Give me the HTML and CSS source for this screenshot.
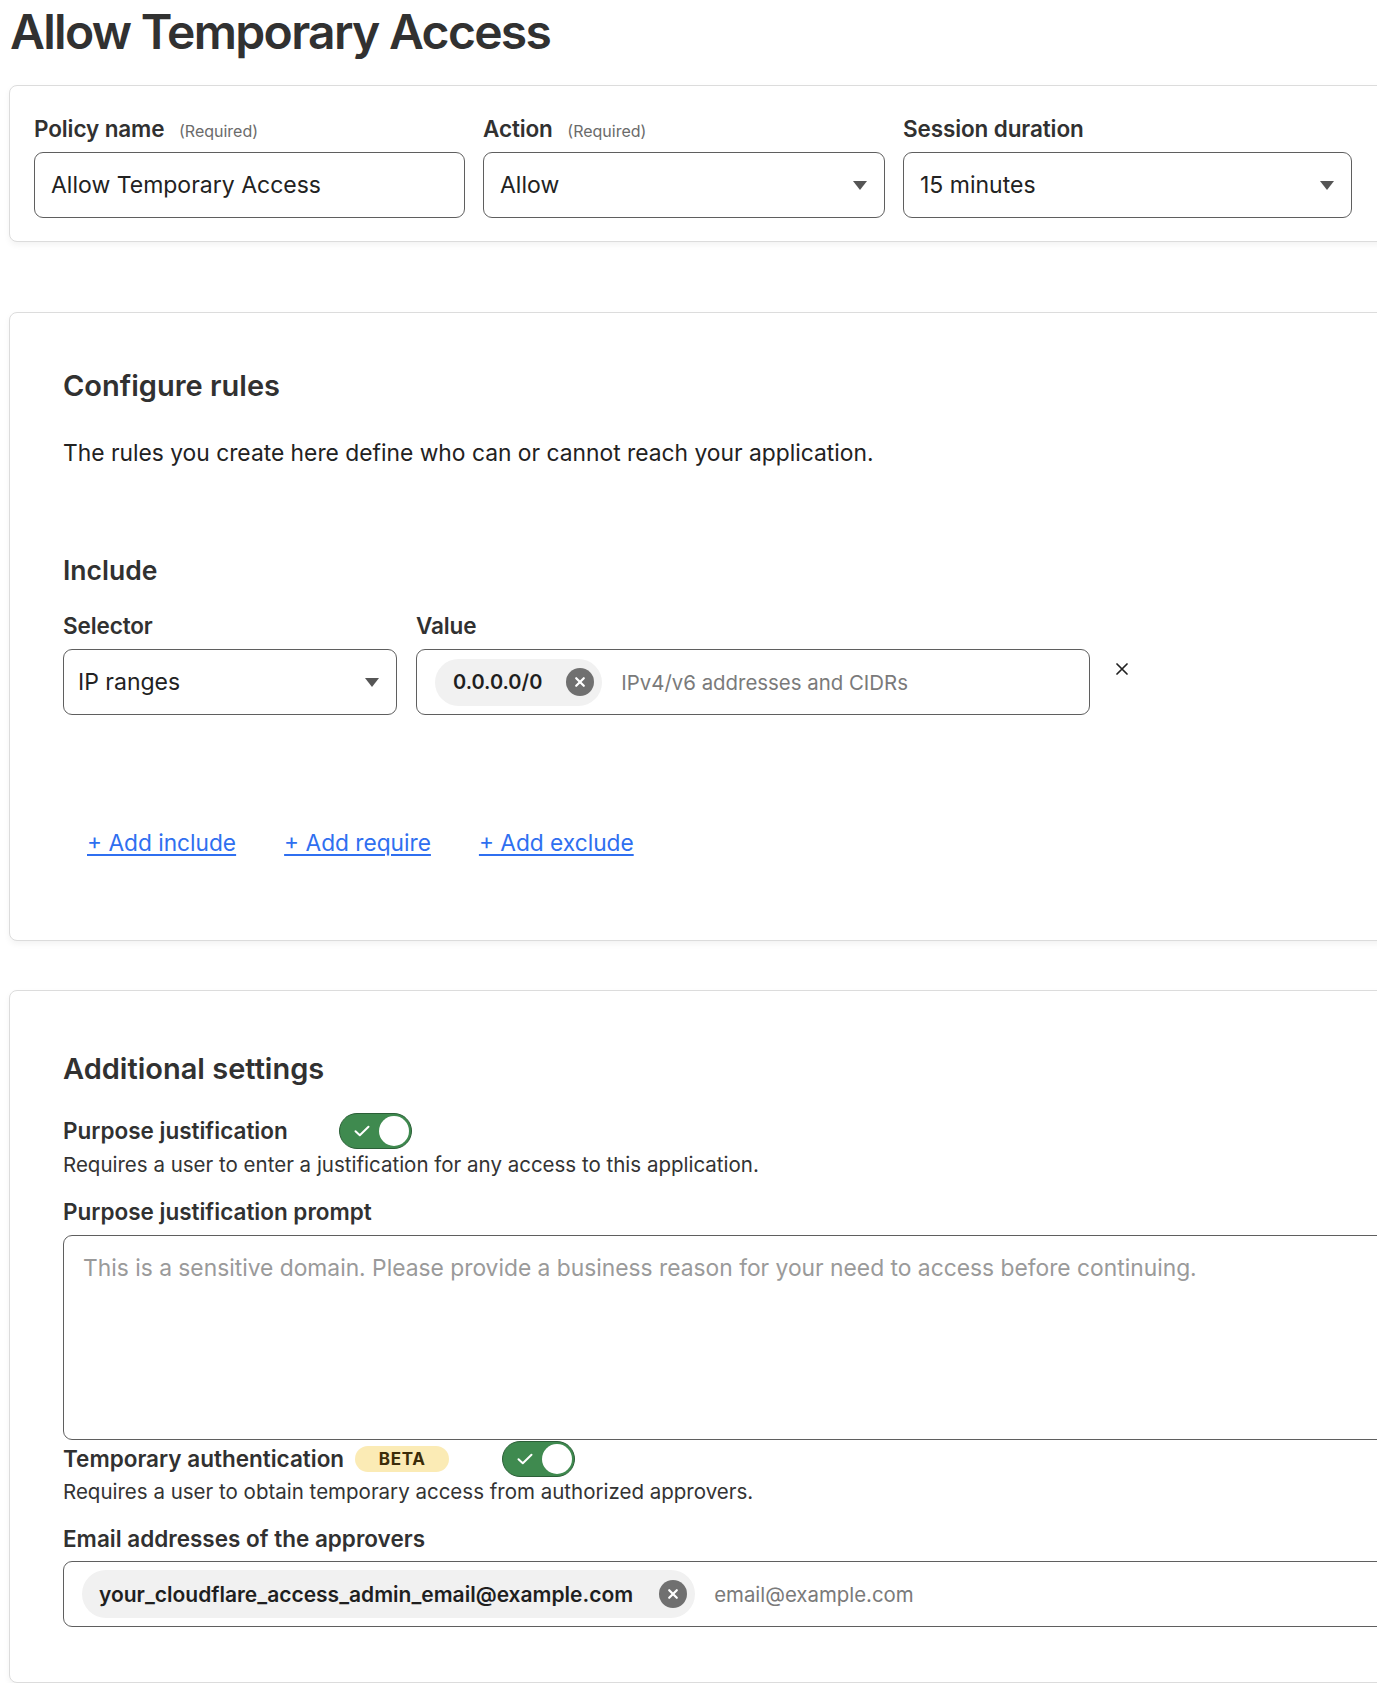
FILE: index.html
```html
<!DOCTYPE html>
<html lang="en">
<head>
<meta charset="utf-8">
<title>Allow Temporary Access</title>
<link rel="stylesheet" href="styles.css">
</head>
<body>
<div class="page">
  <h1 class="title">Allow Temporary Access</h1>

  <section class="card card-top">
    <div class="top-grid">
      <div class="field">
        <div class="label">Policy name <span class="req">(Required)</span></div>
        <div class="box"><span class="val">Allow Temporary Access</span></div>
      </div>
      <div class="field">
        <div class="label">Action <span class="req">(Required)</span></div>
        <div class="box select"><span class="val">Allow</span><span class="caret"></span></div>
      </div>
      <div class="field">
        <div class="label">Session duration</div>
        <div class="box select"><span class="val">15 minutes</span><span class="caret"></span></div>
      </div>
    </div>
  </section>

  <section class="card card-rules">
    <h2 class="h2">Configure rules</h2>
    <p class="lead">The rules you create here define who can or cannot reach your application.</p>
    <h3 class="h3">Include</h3>
    <div class="rule-row">
      <div class="field sel-field">
        <div class="label">Selector</div>
        <div class="box select"><span class="val">IP ranges</span><span class="caret"></span></div>
      </div>
      <div class="field val-field">
        <div class="label">Value</div>
        <div class="box tags">
          <span class="chip"><span class="chip-text">0.0.0.0/0</span><span class="chip-x"><svg viewBox="0 0 28 28" width="28" height="28"><circle cx="14" cy="14" r="14" fill="#707070"/><path d="M10.2 10.2 L17.8 17.8 M17.8 10.2 L10.2 17.8" stroke="#fff" stroke-width="2.2" stroke-linecap="round"/></svg></span></span>
          <span class="ph">IPv4/v6 addresses and CIDRs</span>
        </div>
      </div>
      <div class="remove"><svg viewBox="0 0 12 12" width="12" height="12"><path d="M1 1 L11 11 M11 1 L1 11" stroke="#222" stroke-width="1.7" stroke-linecap="round"/></svg></div>
    </div>
    <div class="links">
      <a class="link" href="#">+ Add include</a>
      <a class="link" href="#">+ Add require</a>
      <a class="link" href="#">+ Add exclude</a>
    </div>
  </section>

  <section class="card card-settings">
    <h2 class="h2">Additional settings</h2>
    <div class="toggle-row">
      <span class="label-lg">Purpose justification</span>
      <span class="toggle t1"><svg class="check" viewBox="0 0 16 12" width="16" height="12"><path d="M1.5 6.2 L5.8 10.2 L14.5 1.8" stroke="#fff" stroke-width="2" fill="none" stroke-linecap="round" stroke-linejoin="round"/></svg><span class="knob"></span></span>
    </div>
    <p class="desc">Requires a user to enter a justification for any access to this application.</p>
    <div class="label-lg sub">Purpose justification prompt</div>
    <div class="textarea"><span class="ta-ph">This is a sensitive domain. Please provide a business reason for your need to access before continuing.</span></div>
    <div class="toggle-row row2">
      <span class="label-lg">Temporary authentication</span>
      <span class="beta">BETA</span>
      <span class="toggle t2"><svg class="check" viewBox="0 0 16 12" width="16" height="12"><path d="M1.5 6.2 L5.8 10.2 L14.5 1.8" stroke="#fff" stroke-width="2" fill="none" stroke-linecap="round" stroke-linejoin="round"/></svg><span class="knob"></span></span>
    </div>
    <p class="desc desc2">Requires a user to obtain temporary access from authorized approvers.</p>
    <div class="label-lg sub">Email addresses of the approvers</div>
    <div class="box tags email-box">
      <span class="chip chip-email"><span class="chip-text">your_cloudflare_access_admin_email@example.com</span><span class="chip-x"><svg viewBox="0 0 28 28" width="28" height="28"><circle cx="14" cy="14" r="14" fill="#707070"/><path d="M10.2 10.2 L17.8 17.8 M17.8 10.2 L10.2 17.8" stroke="#fff" stroke-width="2.2" stroke-linecap="round"/></svg></span></span>
      <span class="ph">email@example.com</span>
    </div>
  </section>
</div>
</body>
</html>
```
FILE: styles.css
```css
html, body {
  margin: 0;
  padding: 0;
  background: #fff;
  overflow: hidden;
}
body {
  font-family: Inter, "Noto Sans", "DejaVu Sans", sans-serif;
  color: #313131;
}
.page {
  padding-left: 9px;
  width: 1480px;
}
.title {
  margin: 2px 0 23px 1px;
  font-size: 48px;
  line-height: 60px;
  font-weight: 600;
  letter-spacing: -0.035em;
  color: #313131;
}
.card {
  border: 1px solid #dcdcdc;
  border-radius: 8px;
  background: #fff;
  box-shadow: 0 3px 6px rgba(0,0,0,0.05);
  width: 1440px;
  box-sizing: border-box;
}
.card-top {
  padding: 30px 0 23px 24px;
  height: 157px;
}
.top-grid {
  display: grid;
  grid-template-columns: 431px 402px 449px;
  column-gap: 18px;
}
.label {
  font-size: 22.5px;
  line-height: 26px;
  height: 26px;
  font-weight: 600;
  letter-spacing: -0.005em;
  margin-bottom: 10px;
  color: #313131;
  white-space: nowrap;
}
.req {
  font-size: 16px;
  font-weight: 400;
  letter-spacing: 0;
  color: #6b6b6b;
  margin-left: 9px;
}
.box {
  height: 66px;
  box-sizing: border-box;
  border: 1px solid #5f5f5f;
  border-radius: 9px;
  display: flex;
  align-items: center;
  padding: 0 16px;
  position: relative;
}
.val {
  font-size: 23px;
  color: #222;
}
.select .caret {
  position: absolute;
  right: 17px;
  top: 50%;
  margin-top: -4px;
  width: 0;
  height: 0;
  border-left: 7px solid transparent;
  border-right: 7px solid transparent;
  border-top: 9px solid #555;
}
.card-rules {
  margin-top: 70px;
  padding: 56px 0 83px 53px;
}
.h2 {
  margin: 0;
  font-size: 29px;
  line-height: 34px;
  font-weight: 600;
  letter-spacing: 0;
  color: #313131;
}
.lead {
  margin: 35px 0 0;
  font-size: 22.8px;
  line-height: 30px;
  color: #222;
}
.h3 {
  margin: 87px 0 0;
  font-size: 26.5px;
  line-height: 30px;
  font-weight: 600;
  letter-spacing: 0;
  color: #313131;
}
.rule-row {
  margin-top: 28px;
  display: flex;
  align-items: flex-start;
}
.sel-field { width: 334px; }
.sel-field .box { padding-left: 14px; }
.val-field { width: 674px; margin-left: 19px; }
.tags { padding-left: 18px; }
.chip {
  display: flex;
  align-items: center;
  height: 47px;
  background: #f1f1f1;
  border-radius: 24px;
  padding: 0 8px 0 18px;
  flex: none;
}
.chip-text {
  font-size: 20px;
  font-weight: 600;
  color: #1f1f1f;
}
.chip-x {
  display: flex;
  margin-left: 24px;
}
.ph {
  margin-left: 19px;
  font-size: 20.4px;
  color: #7a7a7a;
  white-space: nowrap;
}
.remove {
  margin-left: 26px;
  margin-top: 50px;
  display: flex;
}
.links {
  margin-top: 114px;
  margin-left: 24px;
  display: flex;
  gap: 48px;
}
.link {
  font-size: 22.7px;
  line-height: 28px;
  color: #2f6ff0;
  text-decoration: underline;
  text-underline-offset: 3px;
  text-decoration-thickness: 1.5px;
}
.card-settings {
  margin-top: 49px;
  padding: 61px 0 55px 53px;
}
.toggle-row {
  margin-top: 27px;
  display: flex;
  align-items: center;
  height: 36px;
}
.row2 { margin-top: 1px; }
.label-lg {
  font-size: 22.5px;
  line-height: 28px;
  font-weight: 600;
  letter-spacing: 0;
  color: #313131;
  white-space: nowrap;
}
.toggle {
  width: 73px;
  height: 36px;
  box-sizing: border-box;
  border-radius: 18px;
  background: #3f8a4f;
  border: 1.5px solid #2b5f37;
  display: flex;
  align-items: center;
  justify-content: space-between;
  padding: 0 2px 0 14px;
}
.t1 { margin-left: 51px; }
.t2 { margin-left: 53px; }
.knob {
  width: 30px;
  height: 30px;
  border-radius: 50%;
  background: #fff;
}
.check { display: block; }
.desc {
  margin: 3px 0 0;
  font-size: 20.5px;
  line-height: 26px;
  color: #333;
}
.desc2 { margin-top: 2px; }
.sub {
  margin-top: 20px;
}
.textarea {
  margin-top: 9px;
  height: 205px;
  box-sizing: border-box;
  border: 1px solid #5f5f5f;
  border-radius: 9px;
  padding: 17px 19px;
  width: 1400px;
}
.ta-ph {
  font-size: 22.8px;
  line-height: 30px;
  color: #9a9a9a;
}
.beta {
  margin-left: 11px;
  height: 26px;
  width: 94px;
  border-radius: 13px;
  background: #fbebb5;
  color: #3b2c08;
  font-size: 17px;
  font-weight: 700;
  letter-spacing: 0.04em;
  display: flex;
  align-items: center;
  justify-content: center;
}
.email-box {
  margin-top: 8px;
  height: 66px;
  width: 1400px;
  padding-left: 18px;
}
.chip-email {
  height: 48px;
  padding-left: 17px;
}
.chip-email .chip-text {
  font-size: 21px;
}
.chip-email .chip-x {
  margin-left: 26px;
}
```
